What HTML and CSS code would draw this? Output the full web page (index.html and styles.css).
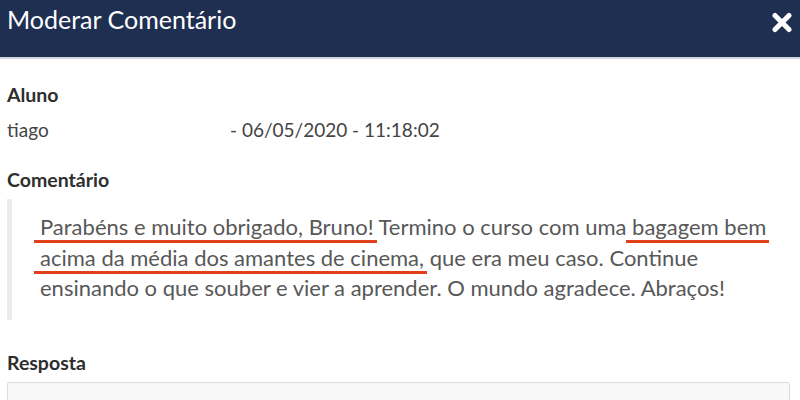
FILE: index.html
```html
<!DOCTYPE html>
<html lang="pt-BR">
<head>
<meta charset="utf-8">
<title>Moderar Comentário</title>
<link rel="stylesheet" href="styles.css">
</head>
<body>
<div class="modal">
  <header class="modal-header">
    <h1 class="modal-title">Moderar Comentário</h1>
    <button class="close" aria-label="Fechar">
      <svg width="22" height="21" viewBox="0 0 22 21"><path d="M4 3.5 L18 17.5 M18 3.5 L4 17.5" stroke="#fff" stroke-width="5" stroke-linecap="round" fill="none"/></svg>
    </button>
  </header>
  <section class="modal-body">
    <div class="label label-first">Aluno</div>
    <div class="meta-row">
      <span class="value">tiago</span>
      <span class="value">- 06/05/2020 - 11:18:02</span>
    </div>
    <div class="label label-comment">Comentário</div>
    <blockquote class="comment">
      <span class="mark">Parabéns e muito obrigado, Bruno!</span> Termino o curso com uma <span class="mark">bagagem bem</span> <span class="mark">acima da média dos amantes de cinema,</span> que era meu caso. Continue ensinando o que souber e vier a aprender. O mundo agradece. Abraços!
    </blockquote>
    <div class="label label-answer">Resposta</div>
    <div class="answer-box"></div>
  </section>
</div>
</body>
</html>
```

FILE: styles.css
```css
html, body {
  margin: 0;
  padding: 0;
  background: #fff;
}
body {
  font-family: Lato, "Open Sans", sans-serif;
  overflow: hidden;
}
.modal-header {
  height: 50px;
  background: #1f2f52;
  border-bottom: 2px solid #cfd6df;
  display: flex;
  justify-content: space-between;
  align-items: flex-start;
  padding: 7px 7px 0 7px;
}
.modal-title {
  margin: 0;
  font-size: 25px;
  line-height: 25px;
  font-weight: 400;
  color: #fff;
}
.close {
  margin: 5px 0 0 0;
  padding: 0;
  border: 0;
  background: none;
  line-height: 0;
}
.modal-body {
  padding: 0 10px 0 7px;
}
.label {
  font-size: 19.5px;
  line-height: 24px;
  font-weight: 700;
  color: #2e2e2e;
}
.label-first {
  margin-top: 24px;
}
.meta-row {
  display: grid;
  grid-template-columns: 223px auto;
  margin-top: 11px;
  font-size: 19px;
  line-height: 24px;
  color: #444;
}
.label-comment {
  margin-top: 26px;
}
.comment {
  margin: 7px 12px 0 0;
  padding: 13px 0 16px 28px;
  border-left: 5px solid #ececec;
  font-size: 22px;
  line-height: 30.5px;
  color: #585858;
}
.mark {
  position: relative;
}
.mark::after {
  content: "";
  position: absolute;
  left: -6px;
  right: -3px;
  top: 100%;
  height: 3px;
  background: #e2401b;
}
.label-answer {
  margin-top: 31px;
}
.answer-box {
  margin-top: 7px;
  height: 60px;
  border: 1px solid #dcdcdc;
  border-radius: 2px;
  background: #f8f8f8;
}
```
